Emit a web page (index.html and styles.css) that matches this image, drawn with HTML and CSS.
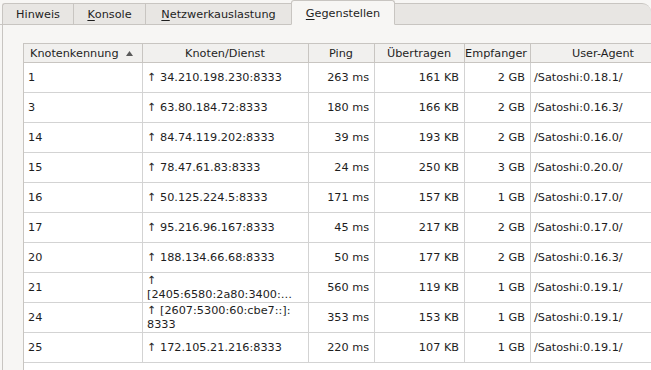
FILE: index.html
```html
<!DOCTYPE html>
<html lang="de">
<head>
    <meta charset="UTF-8">
    <title>Gegenstellen</title>
    <link rel="stylesheet" href="styles.css">
</head>
<body>
    <div class="tabbar">
        <div class="tab first">Hinweis</div>
        <div class="tab"><u>K</u>onsole</div>
        <div class="tab"><u>N</u>etzwerkauslastung</div>
        <div class="tab active"><u>G</u>egenstellen</div>
        <div class="tab-fill"></div>
    </div>

    <div class="panel">
        <div class="peers">
            <div class="row head">
                <div class="cell sortable">Knotenkennung
                    <svg class="sort" width="7" height="5" viewBox="0 0 7 5"><path d="M0 5 L3.5 0 L7 5 Z" fill="#5a5a5a"/></svg>
                </div>
                <div class="cell center">Knoten/Dienst</div>
                <div class="cell center">Ping</div>
                <div class="cell center">Übertragen</div>
                <div class="cell clip">Empfanger</div>
                <div class="cell center">User-Agent</div>
            </div>

            <div class="row">
                <div class="cell">1</div>
                <div class="cell">↑ 34.210.198.230:8333</div>
                <div class="cell num">263 ms</div>
                <div class="cell num">161 KB</div>
                <div class="cell num">2 GB</div>
                <div class="cell agent">/Satoshi:0.18.1/</div>
            </div>
            <div class="row">
                <div class="cell">3</div>
                <div class="cell">↑ 63.80.184.72:8333</div>
                <div class="cell num">180 ms</div>
                <div class="cell num">166 KB</div>
                <div class="cell num">2 GB</div>
                <div class="cell agent">/Satoshi:0.16.3/</div>
            </div>
            <div class="row">
                <div class="cell">14</div>
                <div class="cell">↑ 84.74.119.202:8333</div>
                <div class="cell num">39 ms</div>
                <div class="cell num">193 KB</div>
                <div class="cell num">2 GB</div>
                <div class="cell agent">/Satoshi:0.16.0/</div>
            </div>
            <div class="row">
                <div class="cell">15</div>
                <div class="cell">↑ 78.47.61.83:8333</div>
                <div class="cell num">24 ms</div>
                <div class="cell num">250 KB</div>
                <div class="cell num">3 GB</div>
                <div class="cell agent">/Satoshi:0.20.0/</div>
            </div>
            <div class="row">
                <div class="cell">16</div>
                <div class="cell">↑ 50.125.224.5:8333</div>
                <div class="cell num">171 ms</div>
                <div class="cell num">157 KB</div>
                <div class="cell num">1 GB</div>
                <div class="cell agent">/Satoshi:0.17.0/</div>
            </div>
            <div class="row">
                <div class="cell">17</div>
                <div class="cell">↑ 95.216.96.167:8333</div>
                <div class="cell num">45 ms</div>
                <div class="cell num">217 KB</div>
                <div class="cell num">2 GB</div>
                <div class="cell agent">/Satoshi:0.17.0/</div>
            </div>
            <div class="row">
                <div class="cell">20</div>
                <div class="cell">↑ 188.134.66.68:8333</div>
                <div class="cell num">50 ms</div>
                <div class="cell num">177 KB</div>
                <div class="cell num">2 GB</div>
                <div class="cell agent">/Satoshi:0.16.3/</div>
            </div>
            <div class="row">
                <div class="cell">21</div>
                <div class="cell wrap">↑<br>[2405:6580:2a80:3400:…</div>
                <div class="cell num">560 ms</div>
                <div class="cell num">119 KB</div>
                <div class="cell num">1 GB</div>
                <div class="cell agent">/Satoshi:0.19.1/</div>
            </div>
            <div class="row">
                <div class="cell">24</div>
                <div class="cell wrap">↑ [2607:5300:60:cbe7::]:<br>8333</div>
                <div class="cell num">353 ms</div>
                <div class="cell num">153 KB</div>
                <div class="cell num">1 GB</div>
                <div class="cell agent">/Satoshi:0.19.1/</div>
            </div>
            <div class="row">
                <div class="cell">25</div>
                <div class="cell">↑ 172.105.21.216:8333</div>
                <div class="cell num">220 ms</div>
                <div class="cell num">107 KB</div>
                <div class="cell num">1 GB</div>
                <div class="cell agent">/Satoshi:0.19.1/</div>
            </div>
        </div>
    </div>
</body>
</html>
```

FILE: styles.css
```css
* {
    box-sizing: border-box;
}
body {
    margin: 0;
    font-family: 'DejaVu Sans', sans-serif;
    font-size: 11.25px;
    color: #1e1e1e;
    background: #f7f6f4;
    width: 651px;
    height: 370px;
    overflow: hidden;
}
u {
    text-decoration-thickness: 1px;
    text-underline-offset: 2px;
}

/* tabs */
.tabbar {
    display: flex;
    align-items: flex-end;
    height: 25px;
    padding-left: 2px;
    border-bottom: 1px solid #c8c5c1;
}
.tab {
    height: 22px;
    margin-bottom: -1px;
    padding: 0 13px;
    display: flex;
    align-items: center;
    justify-content: center;
    background: #e8e6e3;
    border-top: 1px solid #c8c5c1;
    border-left: 1px solid #c8c5c1;
    border-bottom: 1px solid #c8c5c1;
}
.tab.first {
    width: 71px;
    border-top-left-radius: 3px;
}
.tab:nth-child(2) {
    width: 72px;
}
.tab:nth-child(3) {
    width: 146px;
}
.tab.active {
    width: 104px;
    height: 25px;
    background: #f7f6f4;
    border-right: 1px solid #c8c5c1;
    border-bottom: 1px solid #f7f6f4;
    border-radius: 3px 3px 0 0;
    padding-top: 1px;
}
.tab-fill {
    flex: 1;
    height: 22px;
    margin-bottom: -1px;
    background: #e8e6e3;
    border-top: 1px solid #c8c5c1;
    border-bottom: 1px solid #c8c5c1;
    border-top-right-radius: 9px;
}

/* panel */
.panel {
    height: 345px;
    margin-left: 2px;
    padding: 18px 0 0 20px;
    border-left: 1px solid #c8c5c1;
    background: #f7f6f4;
}
.peers {
    width: 660px;
    height: 340px;
    background: #fff;
    border-left: 1px solid #c8c5c1;
    border-top: 1px solid #c8c5c1;
}
.row {
    display: grid;
    grid-template-columns: 119px 166px 66px 90px 66px 146px;
    height: 30px;
    border-bottom: 1px solid #d3d3d3;
}
.row.head {
    height: 19px;
    background: #f1f0ee;
    border-bottom: 1px solid #c8c5c1;
}
.cell {
    display: flex;
    align-items: center;
    padding: 0 5px 0 4px;
    border-right: 1px solid #d3d3d3;
    white-space: nowrap;
    overflow: hidden;
}
.head .cell {
    border-right-color: #c8c5c1;
    padding-top: 1px;
}
.cell.sortable {
    padding-left: 6px;
    justify-content: space-between;
    padding-right: 9px;
}
.sort {
    margin-top: -1px;
}
.cell.center {
    justify-content: center;
}
.cell.clip {
    justify-content: flex-end;
    padding-right: 3px;
}
.cell.num {
    justify-content: flex-end;
}
.cell.agent {
    padding-left: 3px;
}
.cell.wrap {
    line-height: 14px;
    padding-top: 1px;
}
```
